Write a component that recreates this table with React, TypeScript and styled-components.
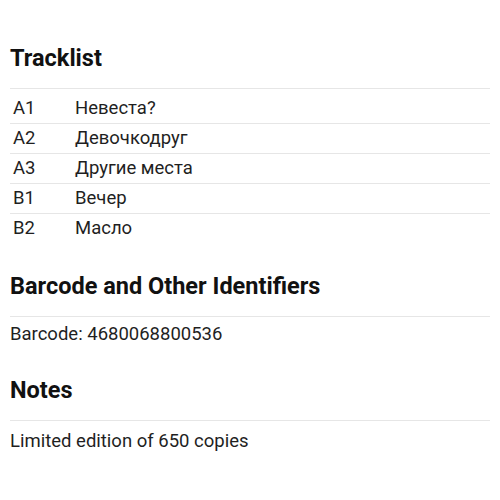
import React from "react";
import styled, { createGlobalStyle } from "styled-components";

const Global = createGlobalStyle`
  html, body { margin: 0; padding: 0; background: #ffffff; }
  body { font-family: Roboto, "Noto Sans", Arial, sans-serif; color: #1f1f1f; }
`;

const Page = styled.div`
  width: 500px;
  height: 500px;
  box-sizing: border-box;
  padding: 45px 10px 0;
  overflow: hidden;
`;

const Section = styled.section<{ $gap?: number }>`
  margin-bottom: ${(p) => p.$gap ?? 30}px;
`;

const Heading = styled.h2`
  margin: 0;
  font-size: 23.5px;
  line-height: 26px;
  font-weight: 700;
  color: #111;
  padding-bottom: 17px;
  border-bottom: 1px solid #e6e6e6;
`;

const Table = styled.div`
  margin-top: 5px;
  display: flex;
  flex-direction: column;
`;

const Row = styled.div`
  display: grid;
  grid-template-columns: 62px 1fr;
  font-size: 18.5px;
  line-height: 21px;
  & + & { border-top: 1px solid #e6e6e6; }
`;

const Cell = styled.div`
  padding: 4px 3px;
`;

const Text = styled.p<{ $top: number }>`
  margin: ${(p) => p.$top}px 0 0;
  font-size: 18.5px;
  line-height: 21px;
`;

const tracks = [
  ["A1", "Невеста?"],
  ["A2", "Девочкодруг"],
  ["A3", "Другие места"],
  ["B1", "Вечер"],
  ["B2", "Масло"],
];

export default function App() {
  return (
    <Page>
      <Global />
      <Section>
        <Heading>Tracklist</Heading>
        <Table>
          {tracks.map(([pos, title]) => (
            <Row key={pos}>
              <Cell>{pos}</Cell>
              <Cell>{title}</Cell>
            </Row>
          ))}
        </Table>
      </Section>
      <Section $gap={32}>
        <Heading>Barcode and Other Identifiers</Heading>
        <Text $top={7}>Barcode: 4680068800536</Text>
      </Section>
      <Section>
        <Heading>Notes</Heading>
        <Text $top={10}>Limited edition of 650 copies</Text>
      </Section>
    </Page>
  );
}
